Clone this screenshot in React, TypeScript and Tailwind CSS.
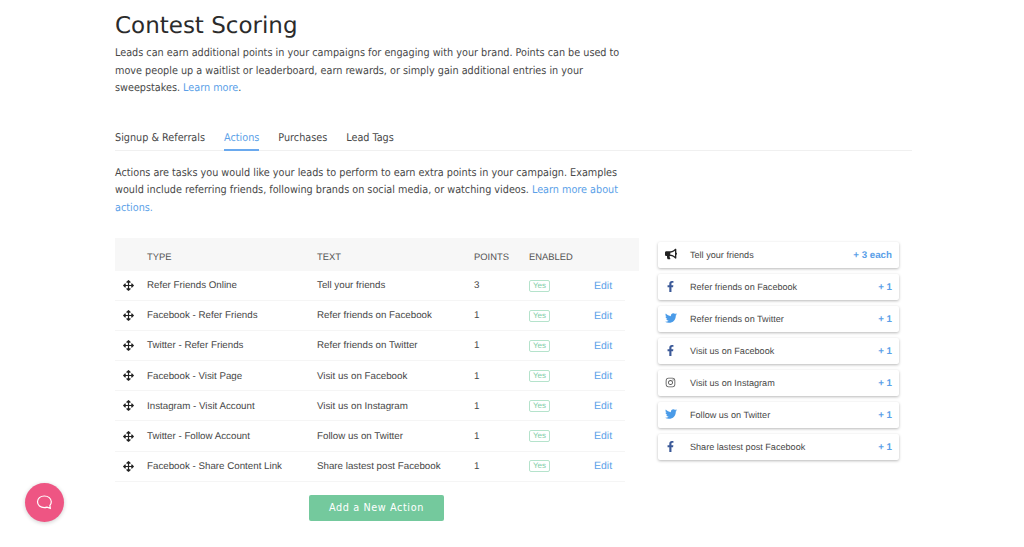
import { FaArrowsAlt, FaBullhorn, FaFacebookF, FaInstagram, FaTwitter } from "react-icons/fa";

const rows = [
  ["Refer Friends Online", "Tell your friends", "3"],
  ["Facebook - Refer Friends", "Refer friends on Facebook", "1"],
  ["Twitter - Refer Friends", "Refer friends on Twitter", "1"],
  ["Facebook - Visit Page", "Visit us on Facebook", "1"],
  ["Instagram - Visit Account", "Visit us on Instagram", "1"],
  ["Twitter - Follow Account", "Follow us on Twitter", "1"],
  ["Facebook - Share Content Link", "Share lastest post Facebook", "1"],
];

const fb = <FaFacebookF className="h-[11px] w-[11px] text-[#3b5998]" />;
const tw = <FaTwitter className="h-[12px] w-[12px] text-[#4a9be8]" />;
const ig = <FaInstagram className="h-[11px] w-[11px] text-[#555]" />;

const cards = [
  { icon: <FaBullhorn className="h-[12px] w-[12px] text-[#222]" />, label: "Tell your friends", pts: "+ 3 each" },
  { icon: fb, label: "Refer friends on Facebook", pts: "+ 1" },
  { icon: tw, label: "Refer friends on Twitter", pts: "+ 1" },
  { icon: fb, label: "Visit us on Facebook", pts: "+ 1" },
  { icon: ig, label: "Visit us on Instagram", pts: "+ 1" },
  { icon: tw, label: "Follow us on Twitter", pts: "+ 1" },
  { icon: fb, label: "Share lastest post Facebook", pts: "+ 1" },
];

const tabs = ["Signup & Referrals", "Actions", "Purchases", "Lead Tags"];

export default function App() {
  return (
    <main className="relative h-[547px] w-[1024px] overflow-hidden bg-white pl-[115px] font-['DejaVu_Sans',sans-serif] text-[#484848] [text-rendering:geometricPrecision]">
      <div className="w-[797px]">
        <h1 className="pt-[11px] text-[23px] leading-[30px] text-[#2b2b2b]">Contest Scoring</h1>
        <p className="mt-[3px] w-[510px] text-[10.75px] leading-[17.5px] [font-stretch:condensed]">
          Leads can earn additional points in your campaigns for engaging with your brand. Points can be used to move people up a waitlist or leaderboard, earn rewards, or simply gain additional entries in your sweepstakes. <a className="text-[#5b9fe8]">Learn more</a>.
        </p>

        <nav className="mt-[31px] flex gap-[19px] border-b border-[#f0f0f0] text-[10.75px] leading-[17px] [font-stretch:condensed]">
          {tabs.map((t) => (
            <span key={t} className={t === "Actions" ? "-mb-px border-b-2 border-[#6aa9ee] pb-[3px] pt-[1px] text-[#5b9fe8]" : "pb-[4px] pt-[1px]"}>
              {t}
            </span>
          ))}
        </nav>

        <p className="mt-[13px] w-[510px] text-[10.75px] leading-[17.5px] [font-stretch:condensed]">
          Actions are tasks you would like your leads to perform to earn extra points in your campaign. Examples would include referring friends, following brands on social media, or watching videos. <a className="text-[#5b9fe8]">Learn more about actions.</a>
        </p>
      </div>

      <div className="mt-[22px] flex items-start font-['Liberation_Sans',sans-serif]">
        <section className="w-[524px]">
          <div className="flex h-[33px] items-center bg-[#f7f7f7] pt-[6px] text-[9.4px] text-[#555]">
            <span className="w-[202px] pl-[32px]">TYPE</span>
            <span className="w-[157px]">TEXT</span>
            <span className="w-[55px]">POINTS</span>
            <span>ENABLED</span>
          </div>
          {rows.map(([type, text, pts]) => (
            <div key={type} className="flex h-[30.1px] w-[510px] items-center border-b border-[#f5f5f5] text-[9.75px] text-[#484848]">
              <span className="flex w-[32px] justify-center pr-[6px]">
                <FaArrowsAlt className="h-[11px] w-[11px] text-[#222]" />
              </span>
              <span className="mt-[2px] w-[170px]">{type}</span>
              <span className="mt-[2px] w-[157px]">{text}</span>
              <span className="mt-[2px] w-[55px]">{pts}</span>
              <span className="w-[65px]">
                <span className="flex h-[12px] w-[21px] items-center justify-center rounded-[2px] border border-[#b5e3cc] text-[8px] text-[#7fcea8]">Yes</span>
              </span>
              <span className="mt-[2px] text-[10.5px] text-[#5b9fe8]">Edit</span>
            </div>
          ))}
          <div className="mt-[13px] flex justify-start pl-[194px]">
            <button className="h-[26px] w-[135px] rounded-[2px] bg-[#74c99d] font-['DejaVu_Sans',sans-serif] text-[10.75px] tracking-[0.6px] text-white [font-stretch:condensed]">
              Add a New Action
            </button>
          </div>
        </section>

        <aside className="ml-[19px] mt-[4px] flex w-[241px] flex-col gap-[6px]">
          {cards.map((c, i) => (
            <div key={i} className="flex h-[26px] items-center rounded-[2px] bg-white pl-[7px] pr-[7px] text-[9.1px] text-[#484848] shadow-[0_1px_3px_rgba(0,0,0,0.28)]">
              <span className="mb-[2px] flex w-[25px] shrink-0">{c.icon}</span>
              <span className="mt-[2px] flex-1">{c.label}</span>
              <span className="mt-[2px] text-[9.75px] font-bold text-[#5b9fe8]">{c.pts}</span>
            </div>
          ))}
        </aside>
      </div>

      <button className="absolute left-[25px] top-[483px] flex h-[39px] w-[39px] items-center justify-center rounded-full bg-[#ee5583] shadow-[0_1px_4px_rgba(0,0,0,0.2)]">
        <svg width="17" height="17" viewBox="0 0 17 17" fill="none" stroke="white" strokeWidth="1.2">
          <path d="M8.3 2C4.4 2 1.5 4.4 1.5 7.8s2.9 5.8 6.8 5.8c1 0 2-.2 2.8-.5l3.2 1.3-.4-3c.9-1 1.4-2.2 1.4-3.6C15.3 4.4 12.2 2 8.3 2z" />
        </svg>
      </button>
    </main>
  );
}
